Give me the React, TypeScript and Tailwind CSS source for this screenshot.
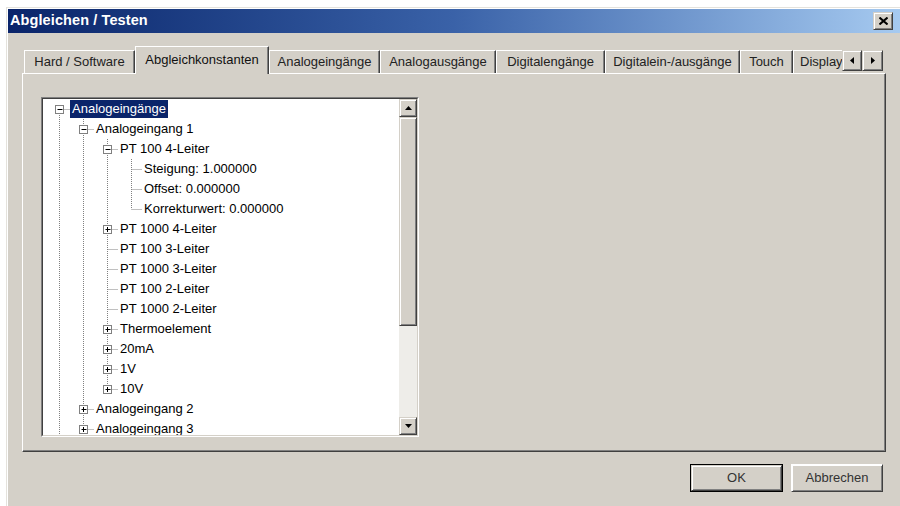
import React from "react";

type Row = {
  level: number;
  label: string;
  kind: "minus" | "plus" | "leaf";
  anc: boolean[];
  next: boolean;
  first?: boolean;
  selected?: boolean;
};

const T = true;

const rows: Row[] = [
  { level: 0, label: "Analogeingänge", kind: "minus", anc: [], next: T, first: T, selected: T },
  { level: 1, label: "Analogeingang 1", kind: "minus", anc: [T], next: T },
  { level: 2, label: "PT 100 4-Leiter", kind: "minus", anc: [T, T], next: T },
  { level: 3, label: "Steigung: 1.000000", kind: "leaf", anc: [T, T, T], next: T },
  { level: 3, label: "Offset: 0.000000", kind: "leaf", anc: [T, T, T], next: T },
  { level: 3, label: "Korrekturwert: 0.000000", kind: "leaf", anc: [T, T, T], next: false },
  { level: 2, label: "PT 1000 4-Leiter", kind: "plus", anc: [T, T], next: T },
  { level: 2, label: "PT 100 3-Leiter", kind: "leaf", anc: [T, T], next: T },
  { level: 2, label: "PT 1000 3-Leiter", kind: "leaf", anc: [T, T], next: T },
  { level: 2, label: "PT 100 2-Leiter", kind: "leaf", anc: [T, T], next: T },
  { level: 2, label: "PT 1000 2-Leiter", kind: "leaf", anc: [T, T], next: T },
  { level: 2, label: "Thermoelement", kind: "plus", anc: [T, T], next: T },
  { level: 2, label: "20mA", kind: "plus", anc: [T, T], next: T },
  { level: 2, label: "1V", kind: "plus", anc: [T, T], next: T },
  { level: 2, label: "10V", kind: "plus", anc: [T, T], next: false },
  { level: 1, label: "Analogeingang 2", kind: "plus", anc: [T], next: T },
  { level: 1, label: "Analogeingang 3", kind: "plus", anc: [T], next: T },
];

function TreeGlyph({ r }: { r: Row }) {
  const w = 24 * r.level + 27;
  const cx = 16.5 + 24 * r.level;
  const dot = { stroke: "#808080", strokeWidth: 1, strokeDasharray: "1 1" };
  return (
    <svg width={w} height={20} className="shrink-0">
      {r.anc.map((a, k) =>
        a ? <line key={k} x1={16.5 + 24 * k} y1={0} x2={16.5 + 24 * k} y2={20} {...dot} /> : null
      )}
      {!r.first && <line x1={cx} y1={0} x2={cx} y2={10} {...dot} />}
      {r.next && <line x1={cx} y1={10} x2={cx} y2={20} {...dot} />}
      <line x1={cx} y1={10.5} x2={cx + 11} y2={10.5} {...dot} />
      {r.kind !== "leaf" && (
        <g>
          <rect x={cx - 4} y={6.5} width={8} height={8} fill="#fff" stroke="#808080" />
          <line x1={cx - 2} y1={10.5} x2={cx + 3} y2={10.5} stroke="#000" />
          {r.kind === "plus" && <line x1={cx} y1={8} x2={cx} y2={13} stroke="#000" />}
        </g>
      )}
    </svg>
  );
}

const raised =
  "bg-[#d4d0c8] border border-t-[#d4d0c8] border-l-[#d4d0c8] border-r-[#404040] border-b-[#404040] shadow-[inset_1px_1px_0_#fff,inset_-1px_-1px_0_#808080]";

function Tab({ w, label, active }: { w: string; label: string; active?: boolean }) {
  if (active) {
    return (
      <div
        className={`${w} relative z-10 h-[28px] mb-[-1px] bg-[#d4d0c8] border-t border-l border-white border-r border-r-[#404040] shadow-[inset_-1px_0_0_#808080] flex items-center justify-center pb-[2px] text-[13px] text-[#111] whitespace-nowrap`}
      >
        {label}
      </div>
    );
  }
  return (
    <div
      className={`${w} h-[23px] bg-[#d4d0c8] border-t border-l border-white border-r border-r-[#404040] shadow-[inset_-1px_0_0_#808080] flex items-center justify-center text-[13px] text-[#222] whitespace-nowrap`}
    >
      {label}
    </div>
  );
}

export default function App() {
  return (
    <div className="w-[900px] h-[506px] overflow-hidden bg-white pt-[7px] pl-[6px] font-['Liberation_Sans',Arial,sans-serif]">
      <div className="flex flex-col w-[894px] h-[499px] bg-[#d4d0c8] border-t border-l border-[#e4e2dc] shadow-[inset_1px_1px_0_#fff] pl-px pt-px">
        {/* Title bar */}
        <div className="h-[24px] w-full shrink-0 flex items-center justify-between pl-[2px] pr-[7px] bg-linear-to-r from-[#0a246a] via-[#3a62a8] to-[#a6caf0]">
          <span className="text-white font-bold text-[14.5px] tracking-[0.1px]">Abgleichen / Testen</span>
          <div className={`w-[20px] h-[18px] flex items-center justify-center ${raised}`}>
            <svg width="9" height="8" viewBox="0 0 9 8">
              <path d="M0.5 0.5 L8.5 7.5 M8.5 0.5 L0.5 7.5" stroke="#000" strokeWidth="2" />
            </svg>
          </div>
        </div>

        {/* Body */}
        <div className="flex flex-col pt-[13px] pl-[14px]">
          {/* Tabs */}
          <div className="flex items-end h-[27px] w-[864px] pl-[2px]">
            <Tab w="w-[111px]" label="Hard / Software" />
            <Tab w="w-[134px]" label="Abgleichkonstanten" active />
            <Tab w="w-[111px]" label="Analogeingänge" />
            <Tab w="w-[116px]" label="Analogausgänge" />
            <Tab w="w-[109px]" label="Digitalengänge" />
            <Tab w="w-[135px]" label="Digitalein-/ausgänge" />
            <Tab w="w-[53px]" label="Touch" />
            <div className="w-[49px] h-[23px] overflow-hidden bg-[#d4d0c8] border-t border-l border-white flex items-center pl-[6px] text-[13px] text-[#222] whitespace-nowrap">
              Display
            </div>
            <div className={`w-[20px] h-[21px] mb-[2px] flex items-center justify-center ${raised}`}>
              <svg width="4" height="7" viewBox="0 0 4 7">
                <path d="M4 0 L0 3.5 L4 7 Z" fill="#000" />
              </svg>
            </div>
            <div className={`w-[21px] h-[21px] mb-[2px] flex items-center justify-center ${raised}`}>
              <svg width="4" height="7" viewBox="0 0 4 7">
                <path d="M0 0 L4 3.5 L0 7 Z" fill="#000" />
              </svg>
            </div>
          </div>

          {/* Panel */}
          <div className="w-[864px] h-[379px] border-t border-l border-white border-r border-b border-r-[#404040] border-b-[#404040] shadow-[inset_-1px_-1px_0_#808080] pt-[23px] pl-[18px]">
            <div className="w-[378px] h-[340px] border border-t-[#808080] border-l-[#808080] border-r-white border-b-white">
              <div className="w-full h-full border border-t-[#404040] border-l-[#404040] border-r-[#d4d0c8] border-b-[#d4d0c8] flex bg-white">
                <div className="flex-1 overflow-hidden flex flex-col">
                  {rows.map((r, i) => (
                    <div key={i} className="h-[20px] shrink-0 flex items-center">
                      <TreeGlyph r={r} />
                      <span
                        className={`text-[13px] leading-[18px] px-[2px] whitespace-nowrap ${
                          r.selected ? "bg-[#0a246a] text-white" : "text-black"
                        }`}
                      >
                        {r.label}
                      </span>
                    </div>
                  ))}
                </div>
                {/* Scrollbar */}
                <div className="w-[18px] flex flex-col bg-[#eeede9]">
                  <div className={`h-[18px] shrink-0 flex items-center justify-center ${raised}`}>
                    <svg width="7" height="4" viewBox="0 0 7 4">
                      <path d="M3.5 0 L7 4 L0 4 Z" fill="#000" />
                    </svg>
                  </div>
                  <div className={`h-[209px] shrink-0 ${raised}`} />
                  <div className="flex-1" />
                  <div className={`h-[18px] shrink-0 flex items-center justify-center ${raised}`}>
                    <svg width="7" height="4" viewBox="0 0 7 4">
                      <path d="M0 0 L7 0 L3.5 4 Z" fill="#000" />
                    </svg>
                  </div>
                </div>
              </div>
            </div>
          </div>

          {/* Buttons */}
          <div className="w-[864px] flex justify-end gap-[8px] pr-[3px] mt-[12px]">
            <div className="w-[93px] h-[28px] border border-black">
              <div className={`w-full h-full flex items-center justify-center text-[13px] text-[#333] ${raised}`}>OK</div>
            </div>
            <div className={`w-[92px] h-[28px] flex items-center justify-center text-[13px] text-[#333] ${raised} border-t-white border-l-white`}>
              Abbrechen
            </div>
          </div>
        </div>
      </div>
    </div>
  );
}
